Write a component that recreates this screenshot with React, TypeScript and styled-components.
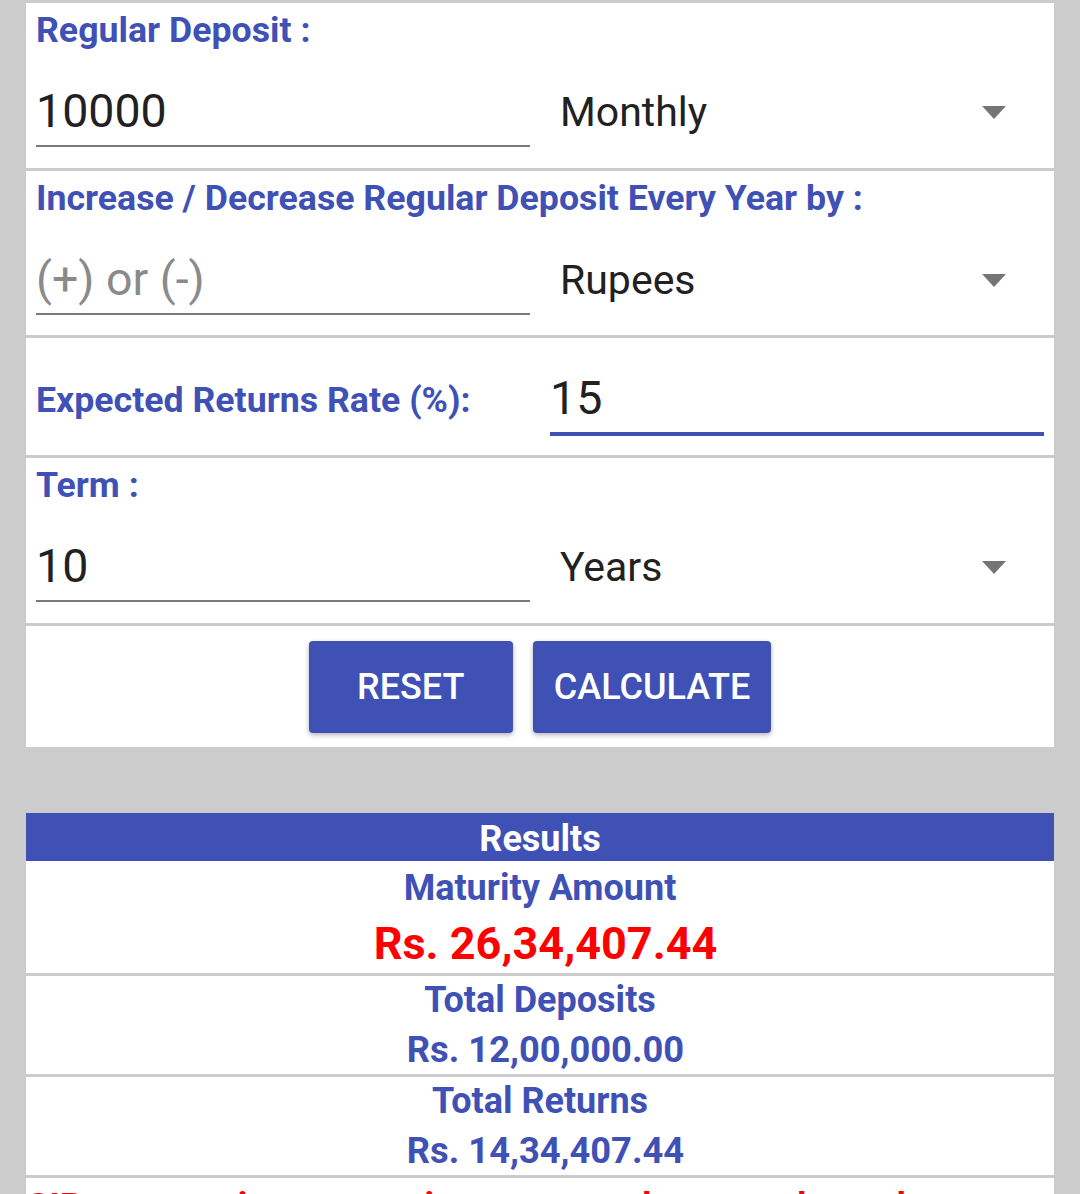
import React from "react";
import styled, { createGlobalStyle } from "styled-components";

const GlobalStyle = createGlobalStyle`
  html, body {
    margin: 0;
    padding: 0;
    background: #cccccc;
  }
  body {
    font-family: Roboto, "Noto Sans", "Liberation Sans", sans-serif;
  }
`;

const BLUE = "#3f51b5";

const Page = styled.div`
  padding: 3px 26px 0;
  display: flex;
  flex-direction: column;
  gap: 66px;
`;

const FormCard = styled.div`
  display: flex;
  flex-direction: column;
  gap: 3px;
  background: #cccccc;
`;

const Section = styled.div<{ $h: number }>`
  background: #ffffff;
  height: ${(p) => p.$h}px;
  box-sizing: border-box;
  padding: 6px 10px 0;
  display: flex;
  flex-direction: column;
`;

const Label = styled.div`
  font-family: Roboto, sans-serif;
  font-weight: 700;
  font-size: 35.7px;
  line-height: 42px;
  color: ${BLUE};
  white-space: nowrap;
`;

const FieldRow = styled.div`
  display: grid;
  grid-template-columns: 494px 1fr;
  column-gap: 32px;
  margin-top: 32px;
`;

const TextInput = styled.input<{ $focused?: boolean }>`
  width: 100%;
  box-sizing: border-box;
  height: ${(p) => (p.$focused ? 66 : 64)}px;
  padding: 0 0 6px;
  margin: 0;
  border: none;
  border-bottom: ${(p) => (p.$focused ? `4px solid ${BLUE}` : "2px solid #7a7a7a")};
  border-radius: 0;
  background: transparent;
  outline: none;
  font-family: Roboto, sans-serif;
  font-weight: 400;
  font-size: 46.5px;
  color: #212121;

  &::placeholder {
    color: #8a8a8a;
    opacity: 1;
  }
`;

const Select = styled.div`
  display: flex;
  align-items: center;
  justify-content: space-between;
  height: 64px;
  box-sizing: border-box;
  padding: 0 38px 6px 0;
  margin-left: -2px;
  font-family: Roboto, sans-serif;
  font-size: 41px;
  color: #212121;
`;

const RateSection = styled.div`
  background: #ffffff;
  height: 117px;
  box-sizing: border-box;
  padding: 0 10px 19px;
  display: grid;
  grid-template-columns: 514px 1fr;
  align-items: end;
`;

const RateLabel = styled(Label)`
  margin-bottom: 15px;
`;

const ButtonBar = styled.div`
  background: #ffffff;
  height: 121px;
  box-sizing: border-box;
  padding-top: 15px;
  display: flex;
  justify-content: center;
  align-items: flex-start;
  gap: 20px;
`;

const Button = styled.button`
  height: 92px;
  min-width: 204px;
  padding: 0 21px;
  border: none;
  border-radius: 4px;
  background: ${BLUE};
  color: #ffffff;
  font-family: Roboto, sans-serif;
  font-weight: 500;
  font-size: 36px;
  box-shadow: 0 2px 5px rgba(0, 0, 0, 0.3);
  cursor: pointer;
`;

const ResultsCard = styled.div`
  display: flex;
  flex-direction: column;
  background: #ffffff;
`;

const ResultsHeader = styled.div`
  background: ${BLUE};
  height: 48px;
  box-sizing: border-box;
  padding-top: 5px;
  text-align: center;
  color: #ffffff;
  font-weight: 700;
  font-size: 36px;
  line-height: 43px;
`;

const ResultRow = styled.div<{ $big?: boolean }>`
  text-align: center;
  padding-top: ${(p) => (p.$big ? 3 : 0)}px;

  & + & {
    border-top: 3px solid #cccccc;
  }
`;

const ResultTitle = styled.div`
  font-weight: 700;
  font-size: 36px;
  line-height: 49px;
  color: ${BLUE};
`;

const ResultValue = styled.div<{ $big?: boolean }>`
  font-weight: 700;
  font-size: ${(p) => (p.$big ? 45 : 36.3)}px;
  line-height: ${(p) => (p.$big ? 58 : 49)}px;
  padding-top: ${(p) => (p.$big ? 2 : 0)}px;
  padding-left: 11px;
  color: ${(p) => (p.$big ? "#ff0000" : BLUE)};
`;

const Disclaimer = styled.div`
  border-top: 3px solid #cccccc;
  padding: 9px 0 0 1px;
  font-weight: 700;
  font-size: 36px;
  line-height: 40px;
  color: #ff0000;
`;

const Arrow = () => (
  <svg width="24" height="13" viewBox="0 0 24 13" aria-hidden>
    <polygon points="0,0 24,0 12,13" fill="#757575" />
  </svg>
);

const DropDown = ({ value }: { value: string }) => (
  <Select>
    <span>{value}</span>
    <Arrow />
  </Select>
);

export default function App() {
  return (
    <>
      <GlobalStyle />
      <Page>
        <FormCard>
          <Section $h={165}>
            <Label>Regular Deposit :</Label>
            <FieldRow>
              <TextInput defaultValue="10000" />
              <DropDown value="Monthly" />
            </FieldRow>
          </Section>
          <Section $h={164}>
            <Label>Increase / Decrease Regular Deposit Every Year by :</Label>
            <FieldRow>
              <TextInput placeholder="(+) or (-)" />
              <DropDown value="Rupees" />
            </FieldRow>
          </Section>
          <RateSection>
            <RateLabel>Expected Returns Rate (%):</RateLabel>
            <TextInput $focused defaultValue="15" />
          </RateSection>
          <Section $h={165}>
            <Label>Term :</Label>
            <FieldRow>
              <TextInput defaultValue="10" />
              <DropDown value="Years" />
            </FieldRow>
          </Section>
          <ButtonBar>
            <Button>RESET</Button>
            <Button>CALCULATE</Button>
          </ButtonBar>
        </FormCard>
        <ResultsCard>
          <ResultsHeader>Results</ResultsHeader>
          <ResultRow $big>
            <ResultTitle>Maturity Amount</ResultTitle>
            <ResultValue $big>Rs. 26,34,407.44</ResultValue>
          </ResultRow>
          <ResultRow>
            <ResultTitle>Total Deposits</ResultTitle>
            <ResultValue>Rs. 12,00,000.00</ResultValue>
          </ResultRow>
          <ResultRow>
            <ResultTitle>Total Returns</ResultTitle>
            <ResultValue>Rs. 14,34,407.44</ResultValue>
          </ResultRow>
          <Disclaimer>
            SIP returns given are estimates, actual returns depend on market.
          </Disclaimer>
        </ResultsCard>
      </Page>
    </>
  );
}
